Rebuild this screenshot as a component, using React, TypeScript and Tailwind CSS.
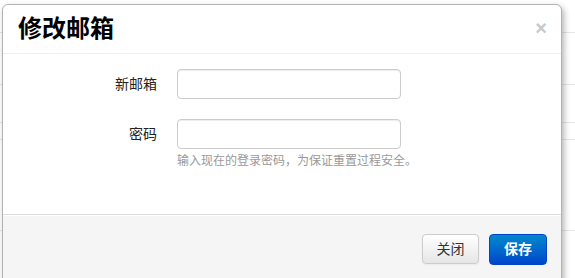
import React from "react";

const font = { fontFamily: '"Liberation Sans", "Noto Sans CJK SC", sans-serif' };

function Field({ label, help }: { label: string; help?: string }) {
  return (
    <div className="flex items-start">
      <label className="w-[154px] shrink-0 pt-[6px] text-right text-[14px] leading-[18px] text-[#222]">{label}</label>
      <div className="ml-[20px]">
        <input
          className="block h-[30px] w-[224px] rounded-[4px] border border-[#cccccc] bg-white px-[6px] text-[14px] shadow-[inset_0_1px_1px_rgba(0,0,0,0.075)] outline-none"
          type={label === "密码" ? "password" : "text"}
        />
        {help && <p className="mt-[4px] text-[12px] leading-[16px] text-[#999999]">{help}</p>}
      </div>
    </div>
  );
}

export default function App() {
  return (
    <div className="relative h-[278px] w-[575px] overflow-hidden bg-white" style={font}>
      {/* faint page behind the dialog */}
      <div className="absolute inset-0 flex flex-col">
        <div className="h-[33px] border-b border-[#e6e6e6]" />
        <div className="h-[52px] border-b border-[#e6e6e6]" />
        <div className="h-[38px] border-b border-[#e6e6e6]" />
        <div className="h-[17px] border-b border-[#e6e6e6]" />
        <div className="h-[91px] border-b border-[#e6e6e6]" />
      </div>

      <div className="absolute left-[2px] top-[4px] flex h-[290px] w-[560px] flex-col rounded-[6px] border border-[#b3b3b3] bg-white shadow-[2px_3px_6px_rgba(0,0,0,0.3)]">
        <div className="flex h-[49px] items-center justify-between border-b border-[#eeeeee] pl-[15px] pr-[14px]">
          <h3 className="text-[24px] font-bold leading-[30px] text-black">修改邮箱</h3>
          <button className="mt-[-2px] text-[20px] font-bold leading-none text-[#c8c8c8]">×</button>
        </div>

        <div className="flex flex-col gap-[20px] pt-[15px]">
          <Field label="新邮箱" />
          <Field label="密码" help="输入现在的登录密码，为保证重置过程安全。" />
        </div>

        <div className="mt-auto flex h-[79px] items-start justify-end gap-[10px] rounded-b-[6px] border-t border-[#dddddd] bg-[#f5f5f5] pr-[14px] pt-[19px] shadow-[inset_0_1px_0_#ffffff]">
          <button className="h-[30px] w-[57px] rounded-[4px] border border-[#cccccc] bg-gradient-to-b from-white to-[#e6e6e6] text-[14px] text-[#333] shadow-[0_1px_2px_rgba(0,0,0,0.05)]">
            关闭
          </button>
          <button className="h-[31px] w-[58px] rounded-[4px] border border-[#0044cc] bg-gradient-to-b from-[#0088cc] to-[#0044cc] text-[14px] font-bold text-white">
            保存
          </button>
        </div>
      </div>
    </div>
  );
}
